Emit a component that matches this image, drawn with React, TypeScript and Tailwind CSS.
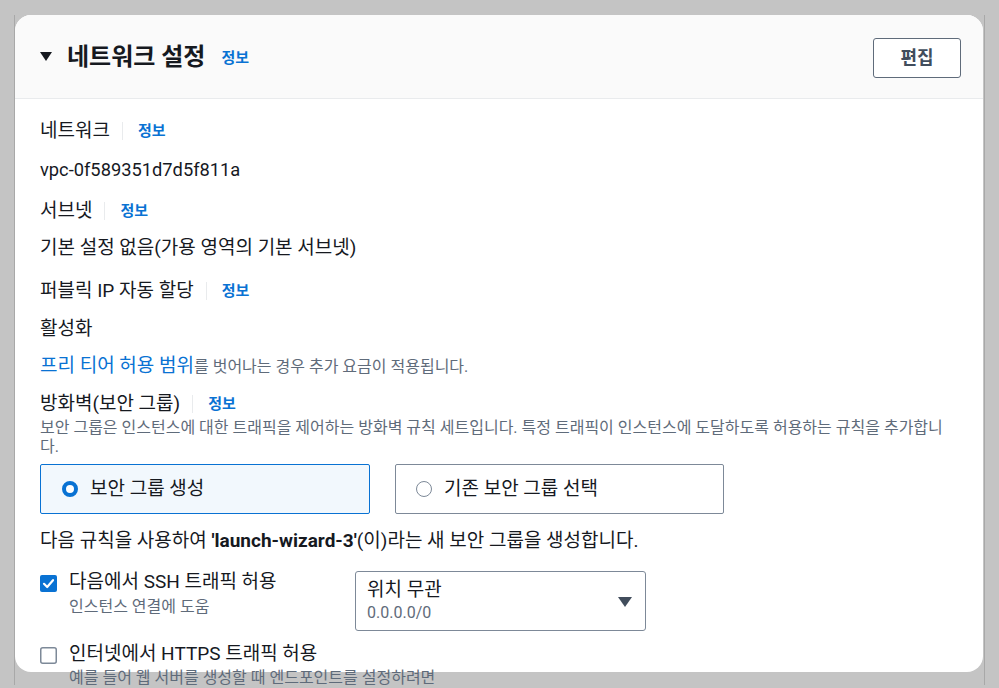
import React from "react";

const FONT = { fontFamily: 'Roboto, "Noto Sans CJK KR", sans-serif' };

function InfoLabel({ text }: { text: string }) {
  return (
    <div className="flex items-center h-[24px] leading-[24px] text-[19px] text-[#16191f]">
      <span>{text}</span>
      <span className="ml-[12px] mr-[15px] w-px h-[18px] bg-[#e9ebed]" />
      <span className="text-[15px] font-bold text-[#0972d3]">정보</span>
    </div>
  );
}

function Value({ text, className = "" }: { text: string; className?: string }) {
  return <div className={"h-[24px] leading-[24px] text-[#16191f] " + className}>{text}</div>;
}

function CheckIcon() {
  return (
    <svg width="17" height="17" viewBox="0 0 17 17" className="block">
      <rect x="0" y="0" width="17" height="17" rx="2" fill="#0972d3" />
      <path d="M4 8.8 L7.2 12 L13 5.2" fill="none" stroke="#ffffff" strokeWidth="2.2" strokeLinecap="round" strokeLinejoin="round" />
    </svg>
  );
}

function EmptyCheck() {
  return (
    <svg width="17" height="17" viewBox="0 0 17 17" className="block">
      <rect x="0.75" y="0.75" width="15.5" height="15.5" rx="2" fill="#ffffff" stroke="#7d8998" strokeWidth="1.5" />
    </svg>
  );
}

export default function App() {
  return (
    <div className="w-[999px] h-[688px] bg-[#c4c4c4] overflow-hidden" style={FONT}>
      <div className="mx-[14px] mt-[18px] h-[670px] border-x border-[#a8a8a8] pr-px">
        <div className="-mt-[3px] h-[657px] rounded-2xl bg-white">
          {/* Header */}
          <div className="h-[84px] rounded-t-2xl bg-[#fafafa] border-b border-[#e9ebed] flex items-center pl-[25px] pr-[22px]">
            <svg width="12" height="9" viewBox="0 0 12 9" className="block">
              <polygon points="0,0 12,0 6,9" fill="#16191f" />
            </svg>
            <div className="ml-[15px] text-[24px] font-bold leading-[30px] text-[#16191f]">네트워크 설정</div>
            <div className="ml-[16px] mt-[3px] text-[15px] font-bold text-[#0972d3] leading-[20px]">정보</div>
            <div className="flex-1" />
            <button className="w-[88px] h-[40px] mt-[2px] border border-[#5f6b7a] rounded-[3px] bg-white text-[18px] font-bold text-[#414d5c] flex items-center justify-center">
              편집
            </button>
          </div>

          {/* Body */}
          <div className="px-[25px] pt-[20px] flex flex-col">
            <InfoLabel text="네트워크" />
            <Value text="vpc-0f589351d7d5f811a" className="mt-[15px] text-[18.3px]" />
            <div className="mt-[17px]">
              <InfoLabel text="서브넷" />
            </div>
            <Value text="기본 설정 없음(가용 영역의 기본 서브넷)" className="mt-[13px] text-[19px]" />
            <div className="mt-[19px]">
              <InfoLabel text="퍼블릭 IP 자동 할당" />
            </div>
            <Value text="활성화" className="mt-[14px] text-[19px]" />
            <div className="mt-[13px] h-[24px] leading-[24px] flex items-baseline">
              <span className="text-[19px] text-[#0972d3]">프리 티어 허용 범위</span>
              <span className="text-[16px] text-[#5f6b7a]">를 벗어나는 경우 추가 요금이 적용됩니다.</span>
            </div>
            <div className="mt-[14px]">
              <InfoLabel text="방화벽(보안 그룹)" />
            </div>
            <div className="mt-[2px] text-[16px] leading-[19px] text-[#5f6b7a]">
              <div className="whitespace-nowrap">
                보안 그룹은 인스턴스에 대한 트래픽을 제어하는 방화벽 규칙 세트입니다. 특정 트래픽이 인스턴스에 도달하도록 허용하는 규칙을 추가합니
              </div>
              <div>다.</div>
            </div>

            {/* Radio cards */}
            <div className="mt-[8px] flex gap-[25px]">
              <div className="w-[330px] h-[50px] border border-[#0972d3] bg-[#f2f8fd] rounded-[2px] flex items-center pl-[21px]">
                <span className="w-[16px] h-[16px] rounded-full border-[4px] border-[#0972d3] bg-white box-border" />
                <span className="ml-[12px] text-[19px] leading-[24px] text-[#16191f]">보안 그룹 생성</span>
              </div>
              <div className="w-[329px] h-[50px] border border-[#7d8998] bg-white rounded-[2px] flex items-center pl-[20px]">
                <span className="w-[16px] h-[16px] rounded-full border-[1.5px] border-[#7d8998] bg-white box-border" />
                <span className="ml-[12px] text-[19px] leading-[24px] text-[#16191f]">기존 보안 그룹 선택</span>
              </div>
            </div>

            <div className="mt-[15px] h-[24px] leading-[24px] text-[19px] text-[#16191f] whitespace-nowrap">
              다음 규칙을 사용하여 <span className="font-bold">'launch-wizard-3'</span>(이)라는 새 보안 그룹을 생성합니다.
            </div>

            {/* SSH row */}
            <div className="mt-[18px] flex">
              <div className="w-[315px] flex">
                <div className="pt-[4px]">
                  <CheckIcon />
                </div>
                <div className="ml-[12px] -mt-px">
                  <div className="h-[24px] leading-[24px] text-[19px] text-[#16191f] whitespace-nowrap">다음에서 SSH 트래픽 허용</div>
                  <div className="mt-[2px] h-[22px] leading-[22px] text-[16px] text-[#5f6b7a]">인스턴스 연결에 도움</div>
                </div>
              </div>
              <div className="w-[291px] h-[60px] border border-[#7d8998] rounded-[3px] flex items-center pl-[11px] pr-[13px]">
                <div className="flex-1">
                  <div className="h-[24px] leading-[24px] text-[19px] text-[#16191f]">위치 무관</div>
                  <div className="h-[22px] leading-[22px] text-[16px] text-[#5f6b7a]">0.0.0.0/0</div>
                </div>
                <svg width="14" height="10" viewBox="0 0 14 10" className="block mt-[2px]">
                  <polygon points="0,0 14,0 7,10" fill="#414d5c" />
                </svg>
              </div>
            </div>

            {/* HTTPS row */}
            <div className="mt-[11px] flex">
              <div className="pt-[5px]">
                <EmptyCheck />
              </div>
              <div className="ml-[12px]">
                <div className="h-[24px] leading-[24px] text-[19px] text-[#16191f] whitespace-nowrap">인터넷에서 HTTPS 트래픽 허용</div>
                <div className="mt-[1px] h-[22px] leading-[22px] text-[16px] text-[#5f6b7a] whitespace-nowrap">예를 들어 웹 서버를 생성할 때 엔드포인트를 설정하려면</div>
              </div>
            </div>
          </div>
        </div>
      </div>
    </div>
  );
}
